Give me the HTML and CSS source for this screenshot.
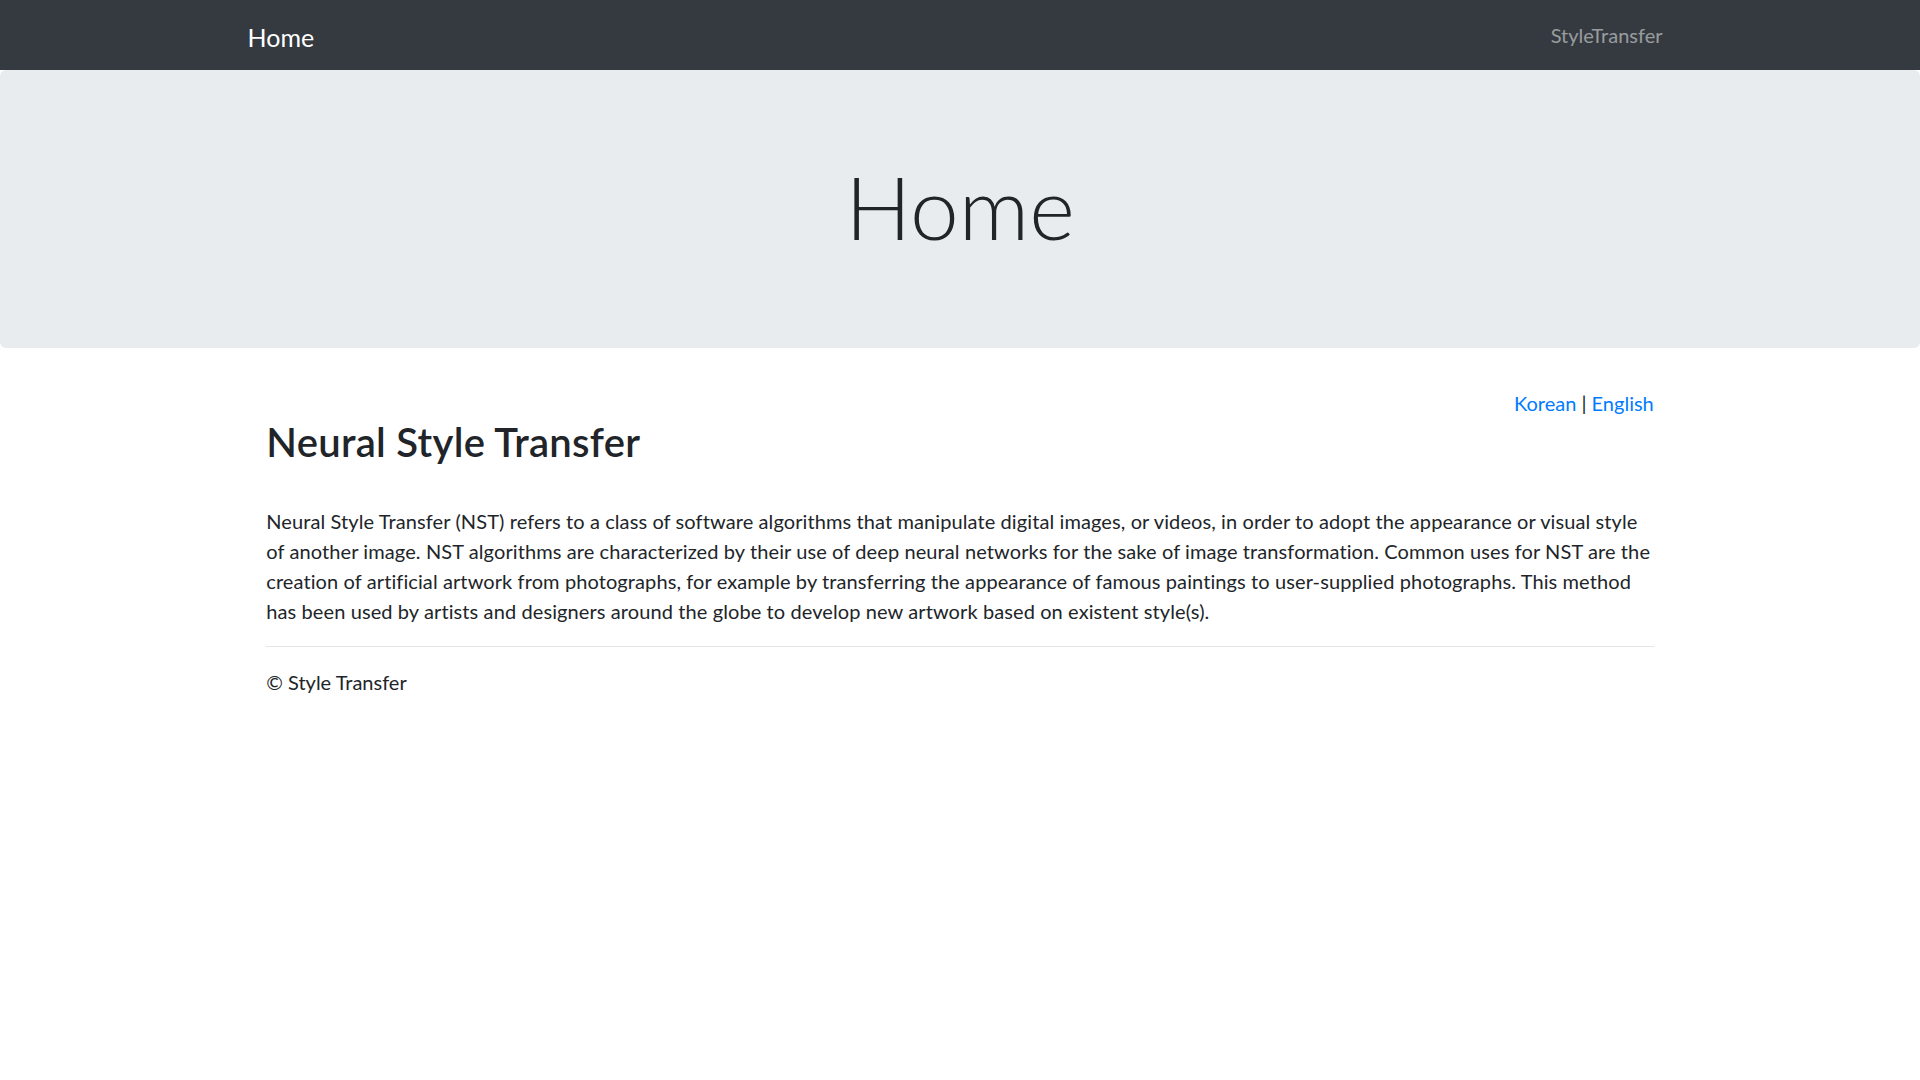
FILE: index.html
```html
<!DOCTYPE html>
<html lang="en">
<head>
<meta charset="utf-8">
<title>Home - StyleTransfer</title>
<link rel="stylesheet" href="styles.css">
</head>
<body>
<nav class="navbar">
  <div class="navbar-container">
    <a class="navbar-brand" href="#">Home</a>
    <ul class="navbar-nav">
      <li class="nav-item"><a class="nav-link" href="#">StyleTransfer</a></li>
    </ul>
  </div>
</nav>
<div class="jumbotron">
  <h1 class="display-title">Home</h1>
</div>
<div class="container">
  <div class="lang-switch"><a href="#" class="link">Korean</a> | <a href="#" class="link">English</a></div>
  <h2 class="page-heading">Neural Style Transfer</h2>
  <p class="intro">Neural Style Transfer (NST) refers to a class of software algorithms that manipulate digital images, or videos, in order to adopt the appearance or visual style of another image. NST algorithms are characterized by their use of deep neural networks for the sake of image transformation. Common uses for NST are the creation of artificial artwork from photographs, for example by transferring the appearance of famous paintings to user-supplied photographs. This method has been used by artists and designers around the globe to develop new artwork based on existent style(s).</p>
  <hr class="divider">
  <footer class="footer">
    <p class="footer-text">&copy; Style Transfer</p>
  </footer>
</div>
</body>
</html>
```
FILE: styles.css
```css
* { box-sizing: border-box; }
html, body { margin: 0; padding: 0; }
body {
  font-family: "Segoe UI", Lato, "Liberation Sans", sans-serif;
  font-size: 20px;
  line-height: 30px;
  color: #212529;
  background: #fff;
}
a { text-decoration: none; }

.navbar {
  background: #343a40;
  padding: 10px 20px;
  height: 70px;
}
.navbar-container {
  max-width: 1425px;
  margin: 0 auto;
  display: flex;
  align-items: center;
  justify-content: space-between;
}
.navbar-brand {
  color: #fff;
  font-size: 25px;
  line-height: 37.5px;
  padding: 8.5px 0 4px;
  margin-right: 20px;
}
.navbar-nav {
  list-style: none;
  margin: 0;
  padding: 0;
  display: flex;
}
.nav-link {
  display: block;
  color: rgba(255, 255, 255, 0.5);
  padding: 10px 10px;
  font-size: 20px;
  line-height: 30px;
}

.jumbotron {
  background: #e9ecef;
  border-radius: 6px;
  padding: 84px 40px 76px;
  margin-bottom: 40px;
  height: 277.5px;
  text-align: center;
}
.display-title {
  margin: 0;
  font-size: 87.5px;
  font-weight: 300;
  line-height: 105px;
}

.container {
  max-width: 1425px;
  margin: 0 auto;
  padding: 0 18.75px;
}
.lang-switch {
  text-align: right;
}
.link { color: #007bff; }

.page-heading {
  margin: 0 0 10px;
  font-size: 40px;
  font-weight: 600;
  line-height: 48px;
  letter-spacing: 0.3px;
}
.intro {
  margin: 40px 0 20px;
  letter-spacing: 0.1px;
}
.divider {
  margin: 20px 0;
  border: 0;
  border-top: 1px solid rgba(0, 0, 0, 0.1);
}
.footer-text {
  margin: 0 0 20px;
}
```
